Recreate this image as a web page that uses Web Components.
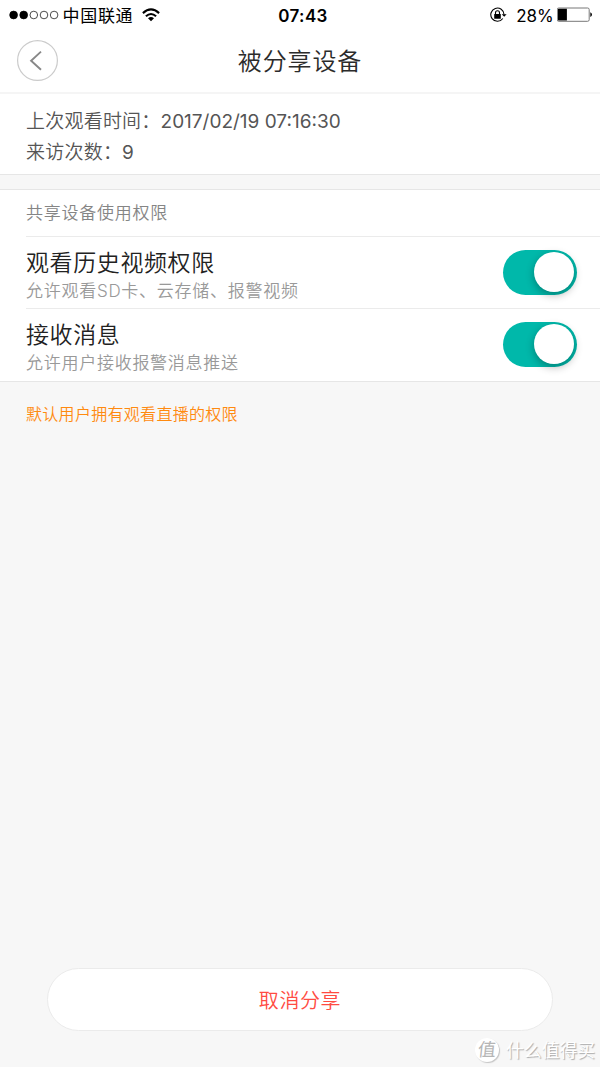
<!DOCTYPE html>
<html lang="zh-CN">
<head>
<meta charset="utf-8">
<title>被分享设备</title>
<style>
html,body{margin:0;height:100%}
body{background:#f7f7f7;font-family:Inter,"Noto Sans CJK SC",sans-serif;overflow:hidden}
</style>
</head>
<body>
<share-page></share-page>
<script>
function define(name, markup) {
  const t = document.createElement('template');
  t.innerHTML = markup;
  customElements.define(name, class extends HTMLElement {
    constructor() {
      super();
      this.attachShadow({mode: 'open'}).appendChild(t.content.cloneNode(true));
    }
  });
}

define('status-bar', `<style>
:host{display:grid;grid-template-columns:1fr auto 1fr;align-items:center;height:30px;padding:0 8px 0 9px;color:#000;background:#fff;white-space:nowrap}
.l,.r{display:flex;align-items:center}
.r{justify-content:flex-end}
svg{display:block;flex:none;margin-bottom:2px}
.c{font-size:17px;letter-spacing:.7px;line-height:30px;padding-top:1px;margin-left:3.5px}
.w{margin-left:8.6px}
.t{font-size:17px;font-weight:600;letter-spacing:.4px;line-height:30px;padding-left:5px}
.p{font-size:17px;line-height:30px;margin:0 3.5px 0 9px;letter-spacing:-.1px}
</style>
<div class="l">
<svg width="50" height="10" viewBox="0 0 50 10"><g stroke="#000" stroke-width=".7" fill="none"><circle cx="4.6" cy="5" r="3.9" fill="#000"/><circle cx="14.7" cy="5" r="3.9" fill="#000"/><circle cx="24.8" cy="5" r="3.8"/><circle cx="35" cy="5" r="3.8"/><circle cx="45.1" cy="5" r="3.8"/></g></svg>
<span class="c">中国联通</span>
<svg class="w" width="18" height="14" viewBox="0 0 18 14"><g fill="none" stroke="#000" stroke-width="2.1"><path d="M.9 5.1Q9-2.2 17.1 5.1"/><path d="M3.9 8.3Q9 3.7 14.1 8.3"/></g><path d="M6 10.2Q9 7.7 12 10.2L9 13.3Z"/></svg>
</div>
<span class="t">07:43</span>
<div class="r">
<svg width="17" height="16" viewBox="0 0 17 16"><g fill="none" stroke="#000" stroke-width="1.1"><path d="M14 7.6A6.6 6.6 0 1 0 12.8 11.5"/><path d="M5.5 7.4V5.8a2 2 0 0 1 4 0V7.4"/></g><rect x="4.2" y="7" width="6.6" height="4.8" rx=".5"/><path d="M11.7 7.2H16.6L14.2 9.8Z"/></svg>
<span class="p">28%</span>
<svg width="35" height="16" viewBox="0 0 35 16"><rect x=".1" y="1" width="32.1" height="13.3" rx="1.6" fill="none" stroke="#777" stroke-width="1"/><path d="M1.5 1.8H9.9V13.5H1.5Q.8 13.5 .8 12.8V2.5Q.8 1.8 1.5 1.8Z"/><path d="M33.3 5.3Q35 6 35 7.6T33.3 10Z"/></svg>
</div>`);

define('nav-header', `<style>
:host{display:grid;grid-template-columns:41px 1fr 41px;align-items:center;height:64px;padding:0 17px 1px;background:#fff;border-bottom:2px solid #f5f5f5;box-sizing:border-box}
svg{display:block}
h1{margin:0;padding-top:2px;text-align:center;font-size:24px;font-weight:350;letter-spacing:.9px;line-height:36px;color:#2b2b2b}
</style>
<svg width="41" height="41" viewBox="0 0 41 41"><circle cx="20.5" cy="20.5" r="19.9" fill="#fff" stroke="#cbcbcb" stroke-width="1.2"/><path d="M24 11.6L14.1 20.7L24 29.8" fill="none" stroke="#888" stroke-width="1.9"/></svg>
<h1><slot></slot></h1>`);

define('visit-info', `<style>
:host{display:block;box-sizing:border-box;height:81px;padding:12px 26px 0;background:#fff;border-bottom:1px solid #e6e6e6;color:#555;font-size:19px;line-height:31px;font-weight:350;white-space:nowrap}
.k{letter-spacing:.22px}
.v{letter-spacing:0;font-weight:400}
</style>
<div><span class="k">上次观看时间：</span><span class="v">2017/02/19 07:16:30</span></div>
<div><span class="k">来访次数：</span><span class="v">9</span></div>`);

define('permission-group', `<style>
:host{display:block;margin-top:14px;background:#fff;border:solid #e6e6e6;border-width:1px 0}
h2{margin:0;height:46px;padding:0 26px;font-size:17px;letter-spacing:.75px;line-height:46px;font-weight:350;color:#858585}
</style><h2>共享设备使用权限</h2><slot></slot>`);

define('toggle-switch', `<style>
:host{display:flex;box-sizing:border-box;width:74px;height:45px;border-radius:23px;background:#00b8aa;padding:2px 3px;justify-content:flex-end}
i{display:block;width:40px;height:40px;border-radius:50%;background:#fff;box-shadow:0 3px 8px rgba(0,0,0,.3)}
</style><i></i>`);

define('permission-row', `<style>
:host{display:flex;box-sizing:border-box;height:72.3px;margin-left:26px;padding:0 23px 0 0;border-top:1px solid #ebebeb;align-items:center;justify-content:space-between;white-space:nowrap}
.x{padding-top:6px}
.t{font-size:23px;letter-spacing:.6px;line-height:30px;color:#222;font-weight:350}
.d{font-size:17px;letter-spacing:.73px;line-height:26px;color:#999;font-weight:350}
</style>
<div class="x"><div class="t"><slot name="title"></slot></div><div class="d"><slot></slot></div></div><toggle-switch></toggle-switch>`);

define('note-text', `<style>:host{display:block;padding:20px 26px;font-size:16px;letter-spacing:.3px;line-height:24px;color:#ff8a0f;font-weight:350}</style><slot></slot>`);

define('cancel-button', `<style>
:host{display:block;margin:auto 47px 36px}
button{display:block;width:100%;height:63px;padding:3px 0 0;border:1px solid #ebebeb;border-radius:32px;background:#fff;color:#ff4b42;font:350 20px/58px Inter,"Noto Sans CJK SC",sans-serif;letter-spacing:.6px}
</style><button><slot></slot></button>`);

define('site-watermark', `<style>
:host{position:absolute;right:5px;bottom:2px;display:flex;align-items:center;gap:7px;color:#fff;font-size:17.8px;line-height:28px;text-shadow:1px 1px 1px #aaa;white-space:nowrap}
b{display:block;width:24px;height:24px;margin-bottom:2px;border-radius:50%;background:#fff;color:#b5b5b5;font-size:18px;line-height:23px;font-weight:400;text-align:center;text-shadow:none;box-shadow:1px 1px 1px #c4c4c4}
b span{display:block;transform:skewX(-6deg)}
</style><b><span>值</span></b><span>什么值得买</span>`);

define('share-page', `<style>
:host{position:relative;display:flex;flex-direction:column;width:600px;height:1067px;background:#f7f7f7;overflow:hidden}
</style>
<status-bar></status-bar>
<nav-header>被分享设备</nav-header>
<visit-info></visit-info>
<permission-group>
<permission-row><span slot="title">观看历史视频权限</span>允许观看SD卡、云存储、报警视频</permission-row>
<permission-row><span slot="title">接收消息</span>允许用户接收报警消息推送</permission-row>
</permission-group>
<note-text>默认用户拥有观看直播的权限</note-text>
<cancel-button>取消分享</cancel-button>
<site-watermark></site-watermark>`);
</script>
</body>
</html>
